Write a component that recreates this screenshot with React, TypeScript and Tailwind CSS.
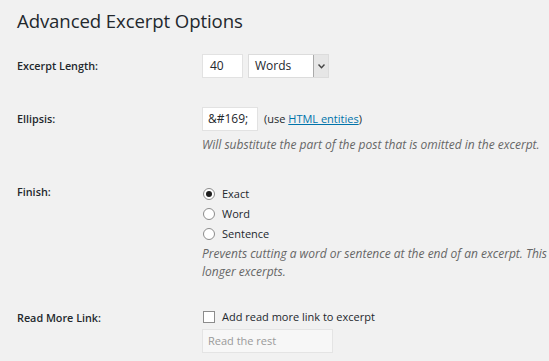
import React from "react";

export default function App() {
  const font = { fontFamily: '"Open Sans", "Noto Sans", sans-serif' };
  return (
    <div className="w-[549px] h-[361px] bg-[#f1f1f1] text-[#23282d] overflow-hidden" style={font}>
      <div className="pl-[17px] pt-[7px]">
        <h2 className="text-[18.6px] leading-[28px] font-normal tracking-[-0.1px]">Advanced Excerpt Options</h2>
      </div>
      <div className="flex flex-col text-[12px]">
        {/* Excerpt Length */}
        <div className="flex mt-[19px] h-[24px] items-center">
          <div className="w-[202px] shrink-0 pl-[17px] font-semibold text-[10.8px]">Excerpt Length:</div>
          <div className="flex items-center gap-[5px]">
            <div className="w-[41px] h-[24px] bg-white border border-[#e2e2e2] flex items-center pl-[7px] text-[12px]">40</div>
            <div className="w-[81px] h-[24px] bg-white border border-[#dcdcdc] flex items-center text-[12px]">
              <span className="flex-1 pl-[6px]">Words</span>
              <div className="w-[15px] h-full bg-[#e6e6e6] border-l border-[#aaa] flex items-center justify-center">
                <svg width="7" height="5" viewBox="0 0 7 5"><path d="M0.5 0.5 L3.5 3.8 L6.5 0.5" fill="none" stroke="#444" strokeWidth="1.4" /></svg>
              </div>
            </div>
          </div>
        </div>
        {/* Ellipsis */}
        <div className="flex mt-[29px]">
          <div className="w-[202px] shrink-0 pl-[17px] font-semibold text-[10.8px] h-[24px] flex items-center">Ellipsis:</div>
          <div className="flex flex-col">
            <div className="flex items-center h-[24px]">
              <div className="w-[56px] h-[24px] bg-white border border-[#e2e2e2] flex items-center pl-[5px] text-[12px]">&amp;#169;</div>
              <span className="ml-[6px] text-[11px]">(use <span className="text-[#0073aa] underline">HTML entities</span>)</span>
            </div>
            <div className="mt-[5px] italic text-[#666] text-[12px] leading-[18px] whitespace-nowrap">Will substitute the part of the post that is omitted in the excerpt.</div>
          </div>
        </div>
        {/* Finish */}
        <div className="flex mt-[29px]">
          <div className="w-[202px] shrink-0 pl-[17px] font-semibold text-[10.8px] leading-[18px]">Finish:</div>
          <div className="flex flex-col pt-[1px] text-[11px]">
            {[
              ["Exact", true],
              ["Word", false],
              ["Sentence", false],
            ].map(([l, c]) => (
              <div key={l as string} className="flex items-center h-[20px]">
                <div className="w-[12px] h-[12px] rounded-full border border-[#8c8c8c] bg-white flex items-center justify-center ml-[1px]">
                  {c ? <div className="w-[6px] h-[6px] rounded-full bg-[#1e1e1e]" /> : null}
                </div>
                <span className="ml-[7px]">{l as string}</span>
              </div>
            ))}
            <div className="mt-[1px] italic text-[#666] text-[12px] leading-[18px] whitespace-nowrap">Prevents cutting a word or sentence at the end of an excerpt. This option can result in</div>
            <div className="italic text-[#666] text-[12px] leading-[18px]">longer excerpts.</div>
          </div>
        </div>
        {/* Read More */}
        <div className="flex mt-[26px]">
          <div className="w-[202px] shrink-0 pl-[17px] font-semibold text-[10.8px] leading-[18px] pt-[2px]">Read More Link:</div>
          <div className="flex flex-col text-[11px]">
            <div className="flex items-center h-[20px]">
              <div className="w-[12px] h-[12px] border border-[#8c8c8c] bg-white ml-[1px]" />
              <span className="ml-[7px]">Add read more link to excerpt</span>
            </div>
            <div className="mt-[2px] w-[131px] h-[24px] bg-[#f7f7f7] border border-[#e4e4e4] flex items-center pl-[5px] text-[#9a9a9a]">Read the rest</div>
          </div>
        </div>
      </div>
    </div>
  );
}
